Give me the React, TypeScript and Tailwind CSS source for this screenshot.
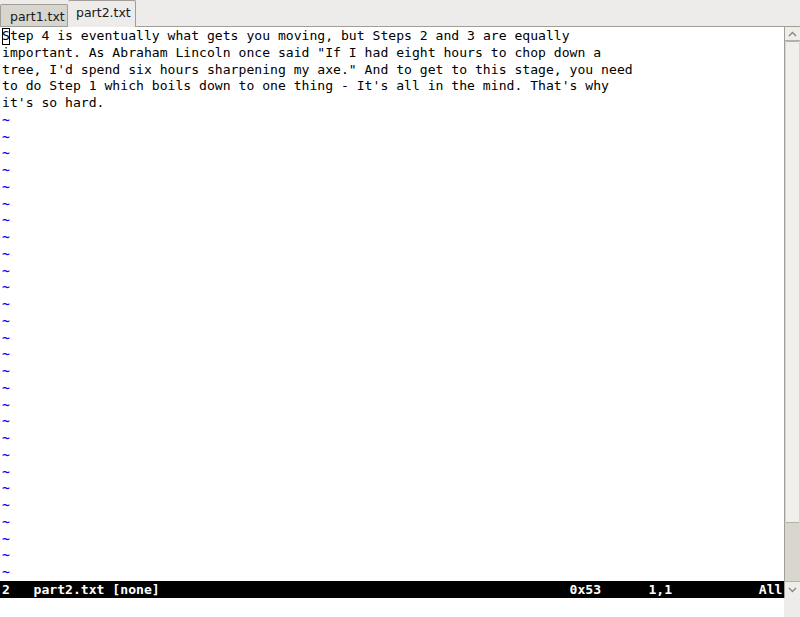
const lines = [
  'tep 4 is eventually what gets you moving, but Steps 2 and 3 are equally',
  'important. As Abraham Lincoln once said "If I had eight hours to chop down a',
  'tree, I\'d spend six hours sharpening my axe." And to get to this stage, you need',
  "to do Step 1 which boils down to one thing - It's all in the mind. That's why",
  "it's so hard.",
];

const tildes = Array.from({ length: 28 }, (_, i) => i);

const status =
  '2   part2.txt [none]'.padEnd(72, ' ') +
  '0x53'.padEnd(10, ' ') +
  '1,1'.padEnd(14, ' ') +
  'All';

function Arrow({ up }: { up?: boolean }) {
  return (
    <svg width="9" height="6" viewBox="0 0 9 6" className={up ? '' : 'rotate-180'}>
      <path d="M1 5 L4.5 1.5 L8 5" fill="none" stroke="#8a8782" strokeWidth="1.4" />
    </svg>
  );
}

export default function App() {
  return (
    <div className="w-[800px] h-[617px] bg-[#edeceb] flex flex-col overflow-hidden">
      {/* tab bar */}
      <div className="h-[27px] flex items-end border-b border-[#a19e98] font-['DejaVu_Sans',sans-serif] text-[12.5px] text-[#1a1a1a]">
        <div className="h-[22px] w-[68px] pl-[9px] pt-[3px] bg-[#d8d5cf] border border-b-0 border-[#a19e98] rounded-t-[2px]">
          part1.txt
        </div>
        <div className="h-[27px] w-[68px] pl-[8px] pt-[3px] bg-[#edeceb] border border-l-0 border-b-0 border-[#a19e98] rounded-t-[2px] -mb-px relative">
          part2.txt
        </div>
      </div>

      <div className="flex flex-1 min-h-0">
        {/* editor */}
        <div className="flex-1 bg-white flex flex-col font-['DejaVu_Sans_Mono',monospace] text-[13.1px] text-black whitespace-pre">
          <div className="pl-[2px] pt-px">
            <div className="h-[16.76px] leading-[16.76px]">
              <span className="inline-block align-top h-[16.5px] shadow-[inset_0_0_0_1px_#000]">S</span>
              {lines[0]}
            </div>
            {lines.slice(1).map((l, i) => (
              <div key={i} className="h-[16.76px] leading-[16.76px]">
                {l}
              </div>
            ))}
            {tildes.map((i) => (
              <div key={i} className="h-[16.76px] leading-[16.76px] text-[#0000ff] font-bold">
                ~
              </div>
            ))}
          </div>
          <div className="h-[17px] leading-[17px] bg-black text-white font-bold pl-[2px]">{status}</div>
          <div className="flex-1" />
        </div>

        {/* scrollbar */}
        <div className="w-[16px] flex flex-col">
          <div className="h-[571px] flex flex-col bg-[#d9d5cf] border-l border-[#a19e98]">
            <div className="h-[14px] flex items-center justify-center bg-[#efedea] border-b border-[#b3afa9]">
              <Arrow up />
            </div>
            <div className="h-[482px] bg-[#f1efec] border-y border-[#b3afa9] mx-px" />
            <div className="flex-1" />
            <div className="h-[17px] flex items-center justify-center bg-[#efedea] border-t border-[#b3afa9]">
              <Arrow />
            </div>
          </div>
          <div className="flex-1" />
        </div>
      </div>
    </div>
  );
}
